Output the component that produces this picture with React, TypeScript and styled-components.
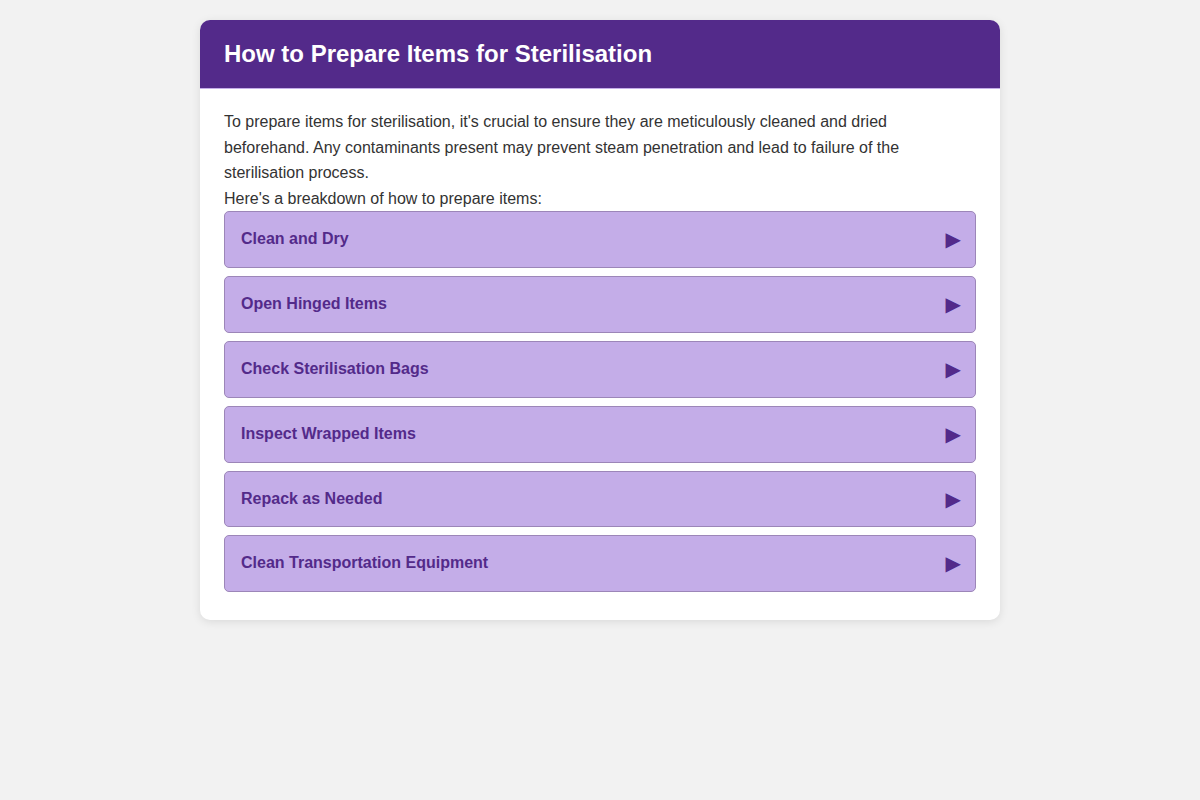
import React, { useState } from 'react';
import styled, { createGlobalStyle } from 'styled-components';

const GlobalStyle = createGlobalStyle`
  html, body {
    margin: 0;
    padding: 0;
    background: #f2f2f2;
  }
  body {
    font-family: "Liberation Sans", Arial, sans-serif;
    color: #333;
  }
`;

const Page = styled.div`
  padding: 20px 0;
  display: flex;
  justify-content: center;
`;

const Card = styled.div`
  width: 800px;
  background: #fff;
  border-radius: 10px;
  box-shadow: 0 2px 10px rgba(0, 0, 0, 0.1);
  overflow: hidden;
`;

const Header = styled.header`
  background: #532a8a;
  padding: 20px 24px;
  border-bottom: 1px solid #c4ade8;
`;

const Title = styled.h1`
  margin: 0;
  font-size: 24px;
  line-height: 28px;
  font-weight: bold;
  color: #fff;
`;

const Body = styled.div`
  padding: 20px 24px;
`;

const Intro = styled.p`
  margin: 0;
  font-size: 16px;
  line-height: 1.6;
  color: #333;
`;

const Step = styled.div`
  margin-bottom: 8px;
  background: #c4ade8;
  border: 1px solid #9c86b8;
  border-radius: 5px;
`;

const StepHeader = styled.button`
  width: 100%;
  display: flex;
  align-items: center;
  justify-content: space-between;
  padding: 15px 14px 15px 16px;
  background: none;
  border: none;
  cursor: pointer;
  font-family: inherit;
  font-size: 16px;
  line-height: 24.8px;
  font-weight: bold;
  color: #532a8a;
  text-align: left;
`;

const Arrow = styled.span<{ open: boolean }>`
  font-family: "DejaVu Sans", sans-serif;
  font-size: 20px;
  line-height: 24.8px;
  color: #532a8a;
  display: inline-block;
  transform: rotate(${({ open }) => (open ? '90deg' : '0deg')});
  transition: transform 0.2s;
`;

const StepContent = styled.div`
  padding: 0 16px 16px;
  font-size: 15px;
  line-height: 1.6;
  color: #333;
`;

const steps = [
  { title: 'Clean and Dry', text: 'Ensure every item is thoroughly cleaned and completely dried before packing.' },
  { title: 'Open Hinged Items', text: 'Hinged instruments should be opened or unlocked so steam can reach all surfaces.' },
  { title: 'Check Sterilisation Bags', text: 'Make sure bags are sealed correctly and not overfilled.' },
  { title: 'Inspect Wrapped Items', text: 'Check wraps for tears, holes or moisture before loading.' },
  { title: 'Repack as Needed', text: 'Repack any item whose packaging is damaged or compromised.' },
  { title: 'Clean Transportation Equipment', text: 'Trolleys and containers used to move items must also be kept clean.' },
];

export default function App() {
  const [open, setOpen] = useState<number | null>(null);

  return (
    <>
      <GlobalStyle />
      <Page>
        <Card>
          <Header>
            <Title>How to Prepare Items for Sterilisation</Title>
          </Header>
          <Body>
            <Intro>
              To prepare items for sterilisation, it's crucial to ensure they are meticulously cleaned and dried
              beforehand. Any contaminants present may prevent steam penetration and lead to failure of the
              sterilisation process.
              <br />
              Here's a breakdown of how to prepare items:
            </Intro>
            {steps.map((s, i) => (
              <Step key={s.title}>
                <StepHeader onClick={() => setOpen(open === i ? null : i)}>
                  {s.title}
                  <Arrow open={open === i}>▶</Arrow>
                </StepHeader>
                {open === i && <StepContent>{s.text}</StepContent>}
              </Step>
            ))}
          </Body>
        </Card>
      </Page>
    </>
  );
}
